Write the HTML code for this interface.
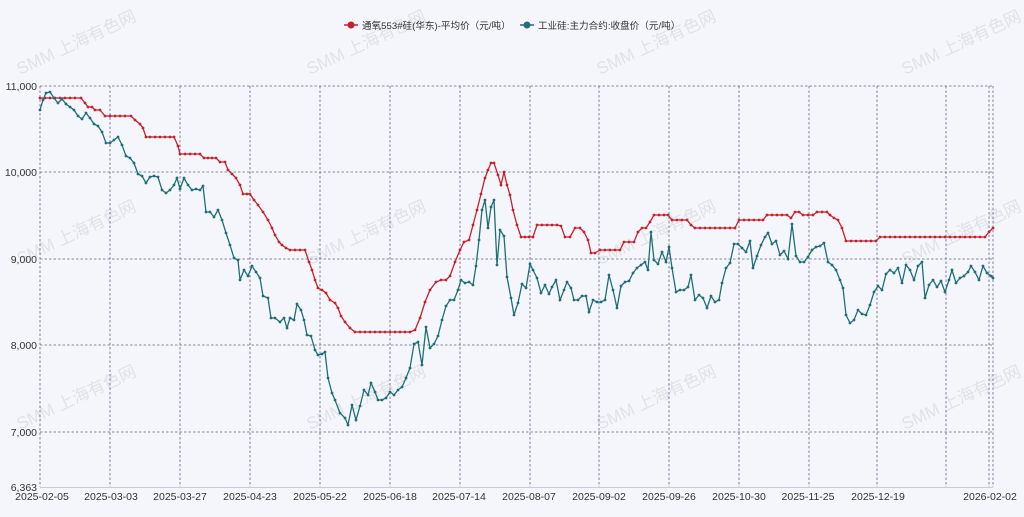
<!DOCTYPE html>
<html><head><meta charset="utf-8"><style>
html,body{margin:0;padding:0;background:#f5f6fb;}
svg{display:block;font-family:"Liberation Sans","Noto Sans CJK SC",sans-serif;}
</style></head><body>
<svg width="1024" height="517" viewBox="0 0 1024 517" xmlns="http://www.w3.org/2000/svg">
<defs>
<marker id="mr" viewBox="0 0 4 4" refX="2" refY="2" markerWidth="4" markerHeight="4" markerUnits="userSpaceOnUse"><circle cx="2" cy="2" r="1.4" fill="#c8202a"/></marker>
<marker id="mt" viewBox="0 0 4 4" refX="2" refY="2" markerWidth="4" markerHeight="4" markerUnits="userSpaceOnUse"><circle cx="2" cy="2" r="1.4" fill="#1f6f78"/></marker>
</defs>
<rect width="1024" height="517" fill="#f5f6fb"/>
<g fill="#e0e2e7" font-size="17">
<text transform="translate(20,75) rotate(-25)">SMM 上海有色网</text>
<text transform="translate(310,75) rotate(-25)">SMM 上海有色网</text>
<text transform="translate(600,75) rotate(-25)">SMM 上海有色网</text>
<text transform="translate(905,75) rotate(-25)">SMM 上海有色网</text>
<text transform="translate(20,265) rotate(-25)">SMM 上海有色网</text>
<text transform="translate(310,265) rotate(-25)">SMM 上海有色网</text>
<text transform="translate(600,265) rotate(-25)">SMM 上海有色网</text>
<text transform="translate(905,265) rotate(-25)">SMM 上海有色网</text>
<text transform="translate(20,430) rotate(-25)">SMM 上海有色网</text>
<text transform="translate(310,430) rotate(-25)">SMM 上海有色网</text>
<text transform="translate(600,430) rotate(-25)">SMM 上海有色网</text>
<text transform="translate(905,430) rotate(-25)">SMM 上海有色网</text>
</g>
<g stroke="#62658a" stroke-width="0.8" stroke-dasharray="2.5,2" fill="none">
<line x1="40" y1="86" x2="993" y2="86"/>
<line x1="40" y1="172" x2="993" y2="172"/>
<line x1="40" y1="259" x2="993" y2="259"/>
<line x1="40" y1="345" x2="993" y2="345"/>
<line x1="40" y1="432" x2="993" y2="432"/>
<line x1="40" y1="86" x2="40" y2="487"/>
<line x1="110" y1="86" x2="110" y2="487"/>
<line x1="180" y1="86" x2="180" y2="487"/>
<line x1="250" y1="86" x2="250" y2="487"/>
<line x1="320" y1="86" x2="320" y2="487"/>
<line x1="390" y1="86" x2="390" y2="487"/>
<line x1="460" y1="86" x2="460" y2="487"/>
<line x1="530" y1="86" x2="530" y2="487"/>
<line x1="599" y1="86" x2="599" y2="487"/>
<line x1="669" y1="86" x2="669" y2="487"/>
<line x1="739" y1="86" x2="739" y2="487"/>
<line x1="809" y1="86" x2="809" y2="487"/>
<line x1="877" y1="86" x2="877" y2="487"/>
<line x1="946" y1="86" x2="946" y2="487"/>
<line x1="989" y1="86" x2="989" y2="487"/>
<line x1="993" y1="86" x2="993" y2="487"/>
</g>
<line x1="40" y1="487.5" x2="993" y2="487.5" stroke="#c9cbd6" stroke-width="1"/>
<g font-size="10.5" fill="#333" text-anchor="end">
<text x="37" y="90">11,000</text>
<text x="37" y="176">10,000</text>
<text x="37" y="263">9,000</text>
<text x="37" y="349">8,000</text>
<text x="37" y="436">7,000</text>
<text x="37" y="491">6,363</text>
</g>
<g font-size="10.5" fill="#333" text-anchor="middle">
<text x="42" y="500">2025-02-05</text>
<text x="111" y="500">2025-03-03</text>
<text x="180" y="500">2025-03-27</text>
<text x="250" y="500">2025-04-23</text>
<text x="320" y="500">2025-05-22</text>
<text x="390" y="500">2025-06-18</text>
<text x="459" y="500">2025-07-14</text>
<text x="529" y="500">2025-08-07</text>
<text x="599" y="500">2025-09-02</text>
<text x="669" y="500">2025-09-26</text>
<text x="739" y="500">2025-10-30</text>
<text x="808" y="500">2025-11-25</text>
<text x="878" y="500">2025-12-19</text>
<text x="990" y="500">2026-02-02</text>
</g>
<g font-size="9.6" fill="#333">
<line x1="344" y1="25" x2="358" y2="25" stroke="#c8202a" stroke-width="1.5"/><circle cx="351" cy="25" r="3.5" fill="#c8202a"/>
<text x="362" y="29">通氧553#硅(华东)-平均价（元/吨）</text>
<line x1="520" y1="25" x2="534" y2="25" stroke="#1f6f78" stroke-width="1.5"/><circle cx="527" cy="25" r="3.5" fill="#1f6f78"/>
<text x="538" y="29">工业硅:主力合约:收盘价（元/吨）</text>
</g>
<polyline fill="none" stroke="#c8202a" stroke-width="1.3" marker-start="url(#mr)" marker-mid="url(#mr)" marker-end="url(#mr)" points="40,98 45,98 50,98 55,98 60,98 65,98 70,98 75,98 81,98 85,103 88,107 92,107 95,110 100,110 105,116 110,116 115,116 120,116 125,116 131,116 135,120 140,124 143,128 146,137 150,137 155,137 160,137 165,137 170,137 174,137 178,146 180,154 185,154 190,154 195,154 200,154 204,158 208,158 212,158 216,158 220,162 225,162 228,170 232,174 236,178 240,185 243,194 247,194 250,194 254,200 258,205 263,212 268,220 272,228 275,235 279,242 282,245 286,248 290,250 295,250 300,250 305,250 309,262 312,270 315,280 318,288 322,290 326,293 330,300 335,303 338,308 341,316 345,322 350,328 355,332 360,332 365,332 370,332 375,332 380,332 385,332 390,332 395,332 400,332 405,332 410,332 415,330 420,318 425,302 430,290 436,282 441,280 446,280 450,276 455,262 460,250 464,242 469,240 473,225 477,210 481,194 485,178 488,170 491,163 494,163 498,175 501,185 504,172 507,185 510,195 513,210 517,225 521,237 525,237 529,237 533,237 537,225 542,225 547,225 552,225 557,225 561,226 565,237 570,237 575,228 580,228 584,232 588,240 591,253 595,253 600,250 605,250 610,250 615,250 620,250 624,242 629,242 634,242 638,232 642,228 646,228 650,222 654,215 659,215 664,215 668,215 672,220 677,220 682,220 687,220 691,225 695,228 700,228 705,228 710,228 715,228 720,228 725,228 730,228 735,228 739,220 744,220 749,220 754,220 759,220 763,220 767,215 772,215 777,215 782,215 787,215 791,218 795,212 799,212 803,215 808,215 813,215 817,212 822,212 827,212 830,215 834,218 838,220 842,228 846,241 851,241 856,241 861,241 866,241 871,241 876,241 880,237 885,237 890,237 895,237 900,237 905,237 910,237 915,237 920,237 925,237 930,237 935,237 940,237 945,237 950,237 955,237 960,237 965,237 970,237 975,237 980,237 985,237 989,232 993,228"/>
<polyline fill="none" stroke="#1f6f78" stroke-width="1.3" marker-start="url(#mt)" marker-mid="url(#mt)" marker-end="url(#mt)" points="40,110 43,100 46,93 50,92 54,98 58,103 62,99 66,104 70,107 74,110 78,116 82,119 86,113 90,118 94,124 98,126 102,132 106,143 110,143 114,140 118,137 122,145 126,156 130,158 134,163 138,174 142,176 146,183 150,177 154,176 158,177 162,190 166,193 170,190 174,185 177,178 180,189 184,178 188,185 192,190 196,189 200,190 203,186 206,212 210,212 214,217 218,210 222,220 226,233 230,245 234,258 238,260 240,280 244,270 248,276 252,266 256,272 260,278 263,296 268,298 271,318 275,318 280,322 284,318 287,328 290,318 294,320 297,304 301,310 304,320 307,335 311,336 315,350 318,355 322,354 325,352 328,378 332,393 335,400 340,413 345,418 348,425 352,405 356,420 360,406 364,390 368,395 371,383 375,392 378,400 382,400 386,398 390,392 394,395 398,390 402,387 406,378 410,368 414,344 418,342 422,365 426,327 430,348 434,344 438,336 442,320 446,306 450,300 454,300 458,290 461,280 465,283 469,282 473,285 476,266 479,240 482,210 485,200 488,228 491,207 494,200 497,265 500,230 504,236 507,277 511,298 514,315 518,303 522,284 526,288 530,264 533,270 537,278 541,293 545,285 549,294 552,287 556,280 560,300 564,290 567,282 571,288 574,300 578,300 582,296 586,296 589,312 593,300 597,302 601,302 605,300 609,275 613,290 617,308 621,286 625,282 629,281 633,273 637,268 641,265 645,262 648,270 651,232 654,260 658,264 662,252 666,262 669,247 672,268 676,292 680,290 684,290 688,287 691,275 695,300 699,295 703,298 707,308 711,296 715,302 719,300 722,283 726,268 730,263 734,244 738,244 742,248 746,252 750,241 753,268 757,256 761,245 765,237 768,233 772,244 776,241 780,255 784,251 788,259 792,224 796,256 800,262 804,262 808,257 812,250 816,247 820,246 824,243 828,262 832,265 836,270 840,280 843,288 846,315 850,323 854,320 858,310 862,314 866,315 870,305 874,292 878,286 882,290 886,274 890,270 894,273 898,268 902,283 906,265 910,270 914,280 918,266 922,262 925,298 929,285 933,280 937,287 941,281 945,292 949,280 952,270 956,283 960,278 964,276 968,272 971,266 975,272 979,280 983,266 987,273 991,276 993,278"/>
</svg>
</body></html>
